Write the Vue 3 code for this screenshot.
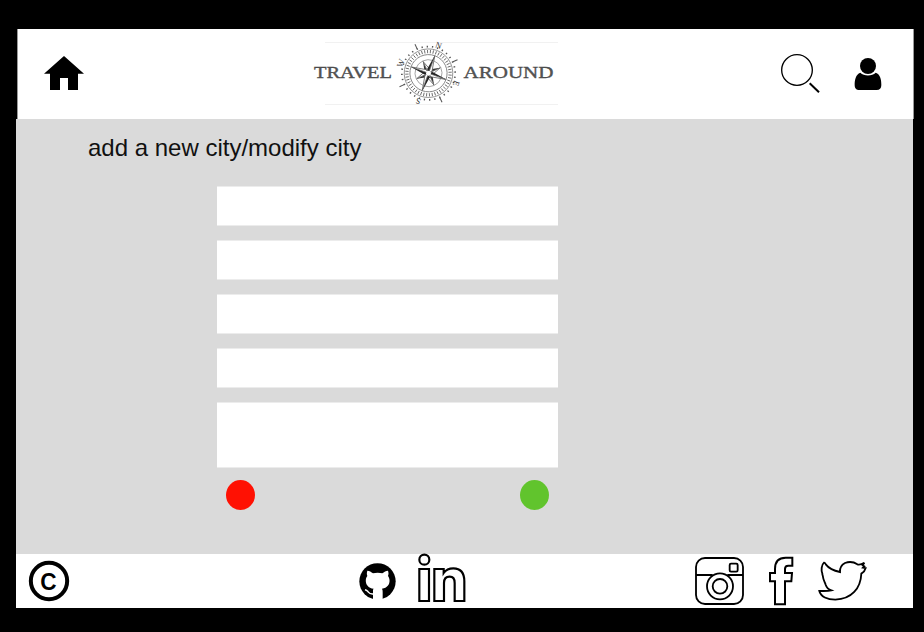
<script setup>
const fields = ['name', 'country', 'language', 'currency']
const ticks = Array.from({ length: 48 }, (_, i) => i * 7.5)
const marks = Array.from({ length: 32 }, (_, i) => i * 11.25)
</script>

<template>
  <div class="page">
    <header class="header">
      <a class="home">
        <svg width="40" height="38" viewBox="132 102 120 114"><path d="M192 108L252 161H234V210H204V174H180V210H150V161H132Z" /></svg>
      </a>
      <svg class="brand" width="250" height="72" viewBox="310 37 250 72">
        <path d="M325 42.5H558M325 104.5H558" stroke="#f1f1f1" />
        <text class="word" x="314" y="78.3" textLength="78" lengthAdjust="spacingAndGlyphs">TRAVEL</text>
        <text class="word" x="463.5" y="78.3" textLength="90" lengthAdjust="spacingAndGlyphs">AROUND</text>
        <g transform="translate(428.5 73.2) rotate(20)" fill="none" stroke="#555">
          <circle r="24.3" stroke-width=".8" stroke="#888" />
          <circle r="18.6" stroke-width=".9" stroke="#888" />
          <circle r="13.5" stroke-width=".8" stroke="#999" />
          <path v-for="a in ticks" :key="a" d="M0-23.3V-20" :transform="`rotate(${a})`" stroke-width=".8" />
          <path v-for="a in marks" :key="'m' + a" d="M0-27.5V-25.8" :transform="`rotate(${a})`" stroke-width="1.3" />
          <g v-for="a in [45, 135, 225, 315]" :key="'d' + a" :transform="`rotate(${a})`">
            <path d="M0-32V-27" stroke-width="1" />
            <path d="M0-13L-2.8-3.4L0 0Z" fill="#333" stroke="none" />
            <path d="M0-13L2.8-3.4L0 0Z" fill="#fff" stroke-width=".7" />
          </g>
          <g v-for="a in [0, 90, 180, 270]" :key="'c' + a" :transform="`rotate(${a})`">
            <path d="M0-20L-2.6-3.4L0 0Z" fill="#222" stroke="none" />
            <path d="M0-18L2.6-3.4L0 0Z" fill="#fff" stroke-width=".7" />
          </g>
          <circle r="2.4" fill="#fff" stroke="none" />
          <g class="cardinal">
            <text y="-26.8">N</text>
            <text y="-26.8" transform="rotate(90)">E</text>
            <text y="-26.8" transform="rotate(180)">S</text>
            <text y="-26.8" transform="rotate(270)">W</text>
          </g>
        </g>
      </svg>
      <a class="search">
        <svg width="40" height="42" viewBox="30 99 120 126">
          <circle cx="81" cy="150" r="46" fill="none" stroke="#000" stroke-width="4" />
          <path d="M119 190L147 217" stroke="#000" stroke-width="6" />
        </svg>
      </a>
      <a class="user">
        <svg width="30" height="36" viewBox="249 108 90 108">
          <circle cx="294" cy="138" r="24" />
          <path d="M271 158C257 163 254 180 254 195C254 206 260 210 268 210H320C329 210 334 205 334 195C334 178 331 163 317 158C306 169 282 169 271 158Z" />
        </svg>
      </a>
    </header>

    <main class="content">
      <h1 class="title">add a new city/modify city</h1>
      <form class="form" @submit.prevent>
        <input v-for="f in fields" :key="f" class="field" type="text" />
        <textarea class="field area"></textarea>
        <div class="actions">
          <button class="dot cancel" type="button"></button>
          <button class="dot save" type="submit"></button>
        </div>
      </form>
    </main>

    <footer class="footer">
      <svg class="copyright" width="42" height="42" viewBox="84 60 126 126">
        <circle cx="147" cy="123" r="54.5" fill="none" stroke="#000" stroke-width="12" />
        <text class="c" x="145" y="148.5" text-anchor="middle" textLength="49" lengthAdjust="spacingAndGlyphs">C</text>
      </svg>
      <svg class="github" width="37" height="36" viewBox="12 12 111 108">
        <circle cx="67.5" cy="67" r="54.5" />
        <path d="M37 35C43 35 49 39 54 43C62 41 74 41 82 43C87 39 93 35 99 35C101 41 101 46 99 51C108 62 105 86 81 89C83 93 83 96 83 100V122H54V96C54 93 54 91 56 89C31 86 28 62 37 51C35 46 35 41 37 35Z" fill="#fff" />
        <path d="M56 105C44 107 42 102 38 97C36 94 34 93 30 92" fill="none" stroke="#fff" stroke-width="4.5" />
      </svg>
      <svg class="linkedin line" width="50" height="50" viewBox="201 24 150 150">
        <circle cx="223" cy="44" r="15" />
        <path d="M208 72H237V168H208ZM253 72H281V84C288 74 298 70 310 70C334 70 343 86 343 109V168H314V114C314 102 311 95 299 95C287 95 282 103 282 114V168H253Z" />
      </svg>
      <svg class="instagram line" width="50" height="50" viewBox="27 33 150 150">
        <rect x="33" y="39" width="141" height="138" rx="27" />
        <path d="M33 90H83M127 90H174" />
        <circle cx="105" cy="124" r="39" />
        <circle cx="105" cy="124" r="22" />
        <rect x="134" y="56" width="24" height="24" rx="4" />
      </svg>
      <svg class="facebook line" width="26" height="52" viewBox="249 30 78 156">
        <path d="M270 178V109H255V84H270V72C270 49 282 38 302 38H322V62H310C303 62 300 66 300 72V84H321L319 109H300V178Z" />
      </svg>
      <svg class="twitter line" width="51" height="43" viewBox="51 42 153 129">
        <path d="M72 53C64 60 63 76 67 86C67 91 69 92 69 96C70 106 75 112 77 119C80 128 85 133 94 136C83 139 72 138 58 138C62 155 82 164 106 164C155 162 182 130 184 86C191 82 195 77 197 69L189 68L193 64L188 61L193 53C185 58 178 60 172 58C160 50 146 50 135 54C124 60 119 70 120 81C101 77 84 67 78 59C76 56 75 52 72 53Z" />
      </svg>
    </footer>
  </div>
</template>

<style>
body {
  margin: 0;
  background: #000;
}
</style>

<style scoped>
.page {
  box-sizing: border-box;
  width: 924px;
  height: 632px;
  padding: 29px 11px 24px 16px;
  background: #000;
  display: flex;
  flex-direction: column;
  font-family: "Liberation Sans", Arial, sans-serif;
}
svg {
  display: block;
  flex: none;
}
.header {
  box-sizing: border-box;
  height: 90px;
  margin: 0 -1px 0 1px;
  padding-left: 26px;
  border: solid #999;
  border-width: 0 1px;
  background: #fff;
  display: flex;
  align-items: flex-start;
}
.home {
  margin-top: 25px;
}
.brand {
  margin: 8px 0 0 226px;
}
.word {
  font-family: "Liberation Serif", serif;
  font-size: 17.5px;
  fill: #555;
  stroke: #444;
  stroke-width: 0.35px;
}
.cardinal text {
  font-family: "Liberation Serif", serif;
  font-size: 8.5px;
  text-anchor: middle;
  fill: #333;
  stroke: none;
}
.search {
  margin: 24px 0 0 220px;
}
.user {
  margin: 27px 0 0 33px;
}
.content {
  height: 435px;
  background: #dadada;
}
.title {
  margin: 0;
  padding: 15px 0 0 72px;
  font-size: 24px;
  line-height: 27px;
  font-weight: 400;
  color: #111;
}
.form {
  width: 341px;
  margin: 25px 0 0 201px;
  display: flex;
  flex-direction: column;
  gap: 14px;
}
.field {
  box-sizing: border-box;
  width: 100%;
  height: 40px;
  margin: 0;
  padding: 8px;
  border: solid #ececec;
  border-width: 1px 0;
  border-radius: 0;
  background: #fff;
  resize: none;
  outline: none;
}
.area {
  height: 66px;
}
.actions {
  display: flex;
  justify-content: space-between;
  padding: 0 9px;
  margin-top: -2px;
}
.dot {
  width: 29px;
  height: 30px;
  padding: 0;
  border: 0;
  border-radius: 50%;
}
.cancel {
  background: #ff1103;
}
.save {
  background: #61c42d;
}
.footer {
  height: 54px;
  background: #fff;
  display: flex;
  align-items: flex-start;
}
.line {
  fill: #fff;
  stroke: #000;
  stroke-width: 5.5;
}
.copyright {
  margin: 6px 0 0 12px;
}
.c {
  font-size: 71px;
  font-weight: 700;
}
.github {
  margin: 9px 0 0 289px;
}
.linkedin {
  margin: -1px 0 0 21px;
  stroke-width: 6.5;
}
.instagram {
  margin: 2px 0 0 227px;
}
.facebook {
  margin: 1px 0 0 24px;
  stroke-width: 6;
}
.twitter {
  margin: 5px 0 0 23px;
}
</style>
